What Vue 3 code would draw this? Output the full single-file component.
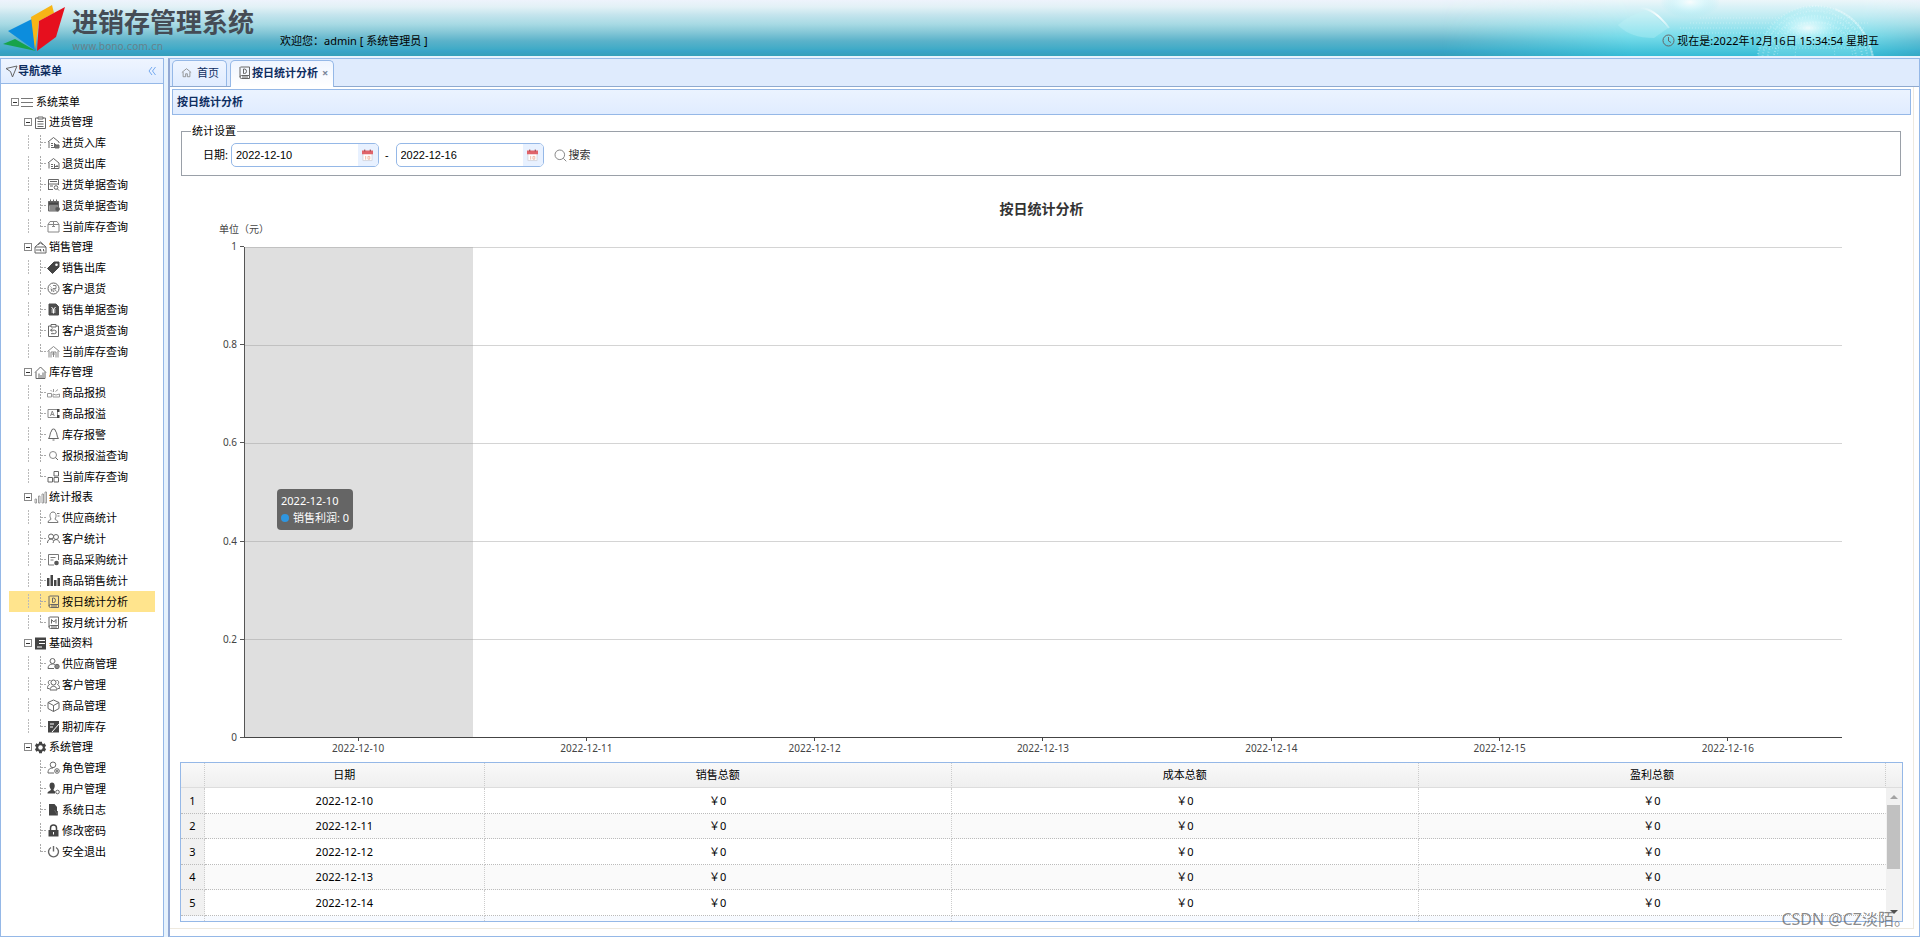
<script setup>
import { ref } from 'vue'

const icons = {
  menu: '<path d="M0 2.500h12M0 6.500h12M0 10.500h12" stroke="#777"/>',
  clipboard: '<path d="M4 2H1.500v10.500h10V2H9M4 1h5v2H4zM3.500 5.500h6M3.500 8h6M3.500 10.500h6"/>',
  houseIn: '<path d="M1 6l5.500-4.500L12 6v1M2 6v6M4 7.500h2M4 9.500h2M4 11.500h3M7.500 7v5"/><path d="M8.500 9h3.500v3H8z" fill="#777"/><path d="M8 8l2 2 2-1"/>',
  houseOut: '<path d="M1 6l5.500-4.500L12 6v5.500H8M2 6v5.500M4 7.500h2M4 9.500h2M4 11.500h3M7.500 7v5M8 9.500h3l-1.500-1.500"/>',
  docSearch: '<path d="M1.500 12V1.500h10V7M1.500 6h10M3 3.500h7M1.500 11.500H6M3 8h3"/><circle cx="9" cy="9.500" r="1.800"/><path d="M10.500 11l1.500 1.500"/>',
  calendarBack: '<path d="M1.500 2.500h10v9.500h-10z" fill="#aaa"/><path d="M1.500 3h10v3h-10z" fill="#444"/><path d="M3.500 0.500v3M6.500 0.500v3M9.500 0.500v3M3 8h7M3 10h5"/><circle cx="10.500" cy="10" r="2" fill="#555"/>',
  box: '<path d="M1 4.500h11v7.500H1zM1 4.500L3 1.500h7l2 3M6.500 1.500v5M5 6.500h3" stroke="#888"/>',
  sale: '<path d="M1 6h11v6H1zM1 6l5.500-5L12 6M4.500 4a2 2 0 014 0"/><path d="M3 8v2M5 8v2M6.500 8v2h1M9.500 8v2h1"/>',
  tag: '<path d="M7 1h5v5l-6.500 6.500L.5 7.500z" fill="#444" stroke="#444"/><circle cx="9.500" cy="3.800" r="1.300" fill="#fff" stroke="none"/>',
  refund: '<circle cx="6.500" cy="6.500" r="5.500"/><path d="M3.500 4.500l1 1M3.500 7h1v2.500M6 3.500h3v3H6v3l1.500-.500M7.500 7L9.500 9.500" stroke-width=".8"/>',
  yen: '<path d="M2 1h7l2.500 2.500V12H2z" fill="#4d4d4d" stroke="#4d4d4d"/><path d="M4.500 4l2 2.500 2-2.500M6.500 6.500v4M4.500 7h4M4.500 9h4" stroke="#fff"/>',
  clipBack: '<path d="M4 2H1.500v10.500h10V2H9M4 .500h5v2.500H4zM5.500 4.500l-2 1.700 2 1.600M3.500 6.200h4a1.700 1.700 0 010 3.500H4"/>',
  houseStock: '<path d="M.5 6.500l6-5 6 5M2 6v6.500M11 6v6.500M4 12.500V7h5v5.500M5 9h3M6.500 7v5" stroke="#888"/>',
  house: '<path d="M1 6.500L6.500 1 12 6.500M2 6v6.500h9V6M5 12V7.500M7 12V9M9 12V6.500"/>',
  damage: '<path d="M.5 7.500h4v3.500h-4zM6 8l3 1 3.500-1v3H6zM6.500 6V3M5 5.500L3.500 4M8.500 5.500L11 3.500" stroke="#999"/>',
  overflow: '<path d="M1 2.500h9.500v8H1zM3.500 9l1.800-5 1.900 5M4.200 7.500h2.400" stroke="#888"/><path d="M10 2h2.500v3H10zM10 8h2.500v3H10z" fill="#444" stroke="none"/>',
  bell: '<path d="M1.500 10.500h10c-2-1.500-1-5.500-3-7.500a2 2 0 00-4 0c-2 2-1 6-3 7.500M5.500 12h2"/>',
  search: '<circle cx="6" cy="6" r="3.500" stroke="#888"/><path d="M8.500 8.500l2.500 2.500"/>',
  blocks: '<path d="M1 7.500h4.500V12H1zM7 7.500h4.500V12H7zM7 1.500h4.500V6H7z"/>',
  bars: '<path d="M1 12V8h1.500v4zM4.500 12V5H6v7zM8 12V3h1.500v9zM11 12V1h1.500v11z" stroke="#888" stroke-width=".8"/>',
  supplier: '<path d="M1 11.500c0-3 3-2 3-3.500-2-3-1-7 2-7s4 4 2 7c0 1.500 3 .500 3 3.500zM10 2.500h2.500M10.500 5h2" stroke="#777"/>',
  people: '<circle cx="4" cy="4.500" r="2.500"/><circle cx="9" cy="5" r="2.500"/><path d="M.5 11c0-3 2-4 3.500-4s2 1 2.500 2M6 11c1-5 6-4 6.500 0"/>',
  purchase: '<path d="M11.500 7V1.500h-10v10.500H7M3.500 4.500h5M3.500 7h3" stroke="#777"/><circle cx="9.500" cy="10" r="2.300" fill="#555" stroke="none"/>',
  solidBars: '<path d="M0 12V4h2.500v8zM3.500 12V1H6v11zM7 12V6h2.500v6zM10.500 12V4H13v8z" fill="#444" stroke="none"/>',
  day: '<path d="M2.500 1h9v8.500H3.500a1.500 1.500 0 000 3h8v-3M2 11V1M4 11h6M5.500 3v4.500h1q2 0 2-2.200T6.500 3z"/>',
  month: '<path d="M2.500 1h9v8.500H3.500a1.500 1.500 0 000 3h8v-3M2 11V1M4 11h6M4.500 7.500V3.500l2.300 2.500L9 3.500v4"/>',
  data: '<path d="M1 .500h11v12H1z" fill="#444" stroke="none"/><path d="M5 3.500h6M5 6.500h6M3 10h5" stroke="#fff"/>',
  userAdd: '<circle cx="5.500" cy="4" r="2.500"/><path d="M1 11.500c0-3 2-4.500 4.500-4.500 1 0 2 0 2.500 1M1 11.500h6"/><circle cx="10" cy="9.500" r="2.200" fill="#888"/>',
  group: '<circle cx="6.500" cy="4.500" r="2.500"/><path d="M3 12c0-5 7-5 7 0zM3.500 2.500C.5 2 1 6 2.500 6.500.5 7.500.5 9 .5 10.500h2M9.500 2.500c3-.500 2.500 3.500 1 4 2 1 2 2.500 2 4h-2"/>',
  cube: '<path d="M6.500 1L12 3.500v6L6.500 12.500 1 9.500v-6zM1 3.500l5.500 3 5.500-3M6.500 6.500v6"/>',
  initial: '<path d="M1 1h11v11.500H1z" fill="#444" stroke="none"/><path d="M3 4h4M3 7h3M5 12l7-8" stroke="#fff"/>',
  gear: '<path d="M6.500 .8v11.400M1.600 3.600l9.800 5.800M1.600 9.400l9.800-5.800" stroke="#444" stroke-width="3"/><circle cx="6.500" cy="6.500" r="4" fill="#444" stroke="#444"/><circle cx="6.500" cy="6.500" r="2.200" fill="#fff" stroke="none"/>',
  role: '<circle cx="6" cy="3.800" r="2.800"/><path d="M1 12c0-4 2-5 5-5M1 12h6"/><circle cx="10" cy="10" r="2.300"/><circle cx="10" cy="10" r=".8"/>',
  user: '<path d="M.5 11.500c0-3 3-2 3.500-4C1.500 4 2.500.5 5 .5s4 3.500 1.500 7c0 1 1 1.500 1.500 2v2z" fill="#444" stroke="none"/><circle cx="10.500" cy="10" r="1.800"/>',
  log: '<path d="M2 1h5.500L10 4v8.500H2z" fill="#444" stroke="none"/><path d="M7.500 7l3 5M10.500 8v4.500"/>',
  lock: '<path d="M1.500 6h10v6.500h-10z" fill="#444" stroke="none"/><path d="M3.500 6V4a3 3 0 016 0v2" stroke="#444" stroke-width="1.500"/><path d="M6.500 8v2.500" stroke="#fff"/>',
  power: '<path d="M4 2.500a5 5 0 105 0M6.500 1v5.500" stroke-width="1.400"/>',
  home: '<path d="M1 6.500L6.500 2 12 6.500M2.500 6v5.500h3V8h2v3.500h3V6" stroke="#888"/>',
  send: '<path d="M1 3.500L12 1 7.500 12 5.500 6.500z"/>',
  clock: '<circle cx="6.500" cy="6.500" r="5.500"/><path d="M6.500 3v4l2.500 1.500"/>',
  find: '<circle cx="5.800" cy="5.800" r="4.800" stroke="#888"/><path d="M9.300 9.300l3 3" stroke="#888"/>'
}

const groups = [
  { name: '进货管理', icon: 'clipboard', items: [['进货入库', 'houseIn'], ['退货出库', 'houseOut'], ['进货单据查询', 'docSearch'], ['退货单据查询', 'calendarBack'], ['当前库存查询', 'box']] },
  { name: '销售管理', icon: 'sale', items: [['销售出库', 'tag'], ['客户退货', 'refund'], ['销售单据查询', 'yen'], ['客户退货查询', 'clipBack'], ['当前库存查询', 'houseStock']] },
  { name: '库存管理', icon: 'house', items: [['商品报损', 'damage'], ['商品报溢', 'overflow'], ['库存报警', 'bell'], ['报损报溢查询', 'search'], ['当前库存查询', 'blocks']] },
  { name: '统计报表', icon: 'bars', items: [['供应商统计', 'supplier'], ['客户统计', 'people'], ['商品采购统计', 'purchase'], ['商品销售统计', 'solidBars'], ['按日统计分析', 'day'], ['按月统计分析', 'month']] },
  { name: '基础资料', icon: 'data', items: [['供应商管理', 'userAdd'], ['客户管理', 'group'], ['商品管理', 'cube'], ['期初库存', 'initial']] },
  { name: '系统管理', icon: 'gear', items: [['角色管理', 'role'], ['用户管理', 'user'], ['系统日志', 'log'], ['修改密码', 'lock'], ['安全退出', 'power']] }
]

const current = '按日统计分析'
const from = ref('2022-12-10')
const to = ref('2022-12-16')
const days = ['2022-12-10', '2022-12-11', '2022-12-12', '2022-12-13', '2022-12-14', '2022-12-15', '2022-12-16']
const scale = ['1', '0.8', '0.6', '0.4', '0.2', '0']
</script>

<template>
  <div class="page">
    <header class="banner">
      <svg class="art" viewBox="0 0 480 56" preserveAspectRatio="none" aria-hidden="true">
        <defs>
          <linearGradient id="sea" x1="0" y1="0" x2="0" y2="1">
            <stop offset="0" stop-color="#ecf6fa" />
            <stop offset=".3" stop-color="#bdebf2" />
            <stop offset=".65" stop-color="#78dcea" />
            <stop offset="1" stop-color="#35bcd6" />
          </linearGradient>
          <linearGradient id="fade" x1="0" y1="0" x2="1" y2="0">
            <stop offset="0" stop-color="#000" />
            <stop offset=".4" stop-color="#fff" />
            <stop offset=".88" stop-color="#fff" />
            <stop offset="1" stop-color="#555" />
          </linearGradient>
          <radialGradient id="glow">
            <stop offset="0" stop-color="#fff" stop-opacity=".95" />
            <stop offset=".4" stop-color="#d8fbff" stop-opacity=".6" />
            <stop offset="1" stop-color="#8be6f2" stop-opacity="0" />
          </radialGradient>
          <linearGradient id="edge" x1="0" y1="0" x2="1" y2="1">
            <stop offset="0" stop-color="#fff" stop-opacity="0" />
            <stop offset=".5" stop-color="#fff" stop-opacity=".9" />
            <stop offset="1" stop-color="#fff" stop-opacity=".3" />
          </linearGradient>
          <mask id="side"><rect width="480" height="56" fill="url(#fade)" /></mask>
        </defs>
        <rect width="480" height="56" fill="url(#sea)" mask="url(#side)" />
        <ellipse cx="250" cy="2" rx="30" ry="16" fill="url(#glow)" opacity=".8" />
        <path d="M178 25q14-12 30-15l20 18-14 10q-24 0-36-13" fill="#c8f5fa" opacity=".3" />
        <path d="M200 8q14 0 29 20" fill="none" stroke="url(#edge)" stroke-width="2" />
        <circle cx="375" cy="64" r="58" fill="#a6eef6" opacity=".3" />
        <g fill="none" stroke="#f0ffff" stroke-opacity=".35" stroke-dasharray="1 2">
          <circle cx="375" cy="64" r="58" stroke-width="2" />
          <circle cx="375" cy="64" r="53" stroke-width="2" />
          <circle cx="375" cy="64" r="48" stroke-width="2" />
          <circle cx="375" cy="64" r="42" stroke-width="2" />
          <ellipse cx="375" cy="64" rx="38" ry="58" />
          <ellipse cx="375" cy="64" rx="20" ry="58" />
          <path d="M260 18h150M250 23h180M240 28h185M245 33h180M260 38h160M322 43h106M320 48h110" />
        </g>
        <ellipse cx="368" cy="28" rx="42" ry="20" fill="url(#glow)" opacity=".85" />
        <path d="M395 9q30 12 38 47" fill="none" stroke="#fff" stroke-opacity=".3" stroke-width="2" />
      </svg>
      <svg class="logo" viewBox="0 0 62 48" aria-hidden="true">
        <path d="M0 39l12-5 21 12z" fill="#17a34a" />
        <path d="M5 26l24-12 4 32z" fill="#0c8ddd" />
        <path d="M28 12L49 0l2 8-15 8-4 29z" fill="#f7b516" />
        <path d="M36 16L62 2 53 32 34 46z" fill="#e60f1e" />
      </svg>
      <div class="brand">
        <strong>进销存管理系统</strong>
        <span>www.bono.com.cn</span>
      </div>
      <p class="welcome">欢迎您：admin [ 系统管理员 ]</p>
      <p class="now"><svg class="icon" viewBox="0 0 13 13" v-html="icons.clock"></svg>现在是:2022年12月16日 15:34:54 星期五</p>
    </header>

    <div class="body">
      <nav class="side">
        <div class="side-head">
          <svg class="icon" viewBox="0 0 13 13" v-html="icons.send"></svg>
          <b>导航菜单</b>
          <button type="button" aria-label="收起">
            <svg viewBox="0 0 8 8"><path d="M4 0L1 4l3 4M7.500 0l-3 4 3 4" fill="none" stroke="#74a8ee" /></svg>
          </button>
        </div>
        <ul class="tree">
          <li>
            <div class="row head"><i class="toggle"></i><svg class="icon" viewBox="0 0 13 13" v-html="icons.menu"></svg><a href="#">系统菜单</a></div>
          </li>
          <li v-for="(g, gi) in groups" :key="g.name">
            <div class="row head"><i class="cell"></i><i class="toggle"></i><svg class="icon" viewBox="0 0 13 13" v-html="icons[g.icon]"></svg><a href="#">{{ g.name }}</a></div>
            <ul>
              <li v-for="([name, icon], i) in g.items" :key="name" class="row" :class="{ on: name === current }">
                <i class="cell"></i>
                <i class="cell" :class="{ line: gi < groups.length - 1 }"></i>
                <i class="cell join" :class="{ end: i === g.items.length - 1 }"></i>
                <svg class="icon" viewBox="0 0 13 13" v-html="icons[icon]"></svg>
                <a href="#">{{ name }}</a>
              </li>
            </ul>
          </li>
        </ul>
      </nav>

      <main class="main">
        <div class="tabs">
          <button type="button" class="tab"><svg class="icon" viewBox="0 0 13 13" v-html="icons.home"></svg>首页</button>
          <button type="button" class="tab active"><svg class="icon" viewBox="0 0 13 13" v-html="icons.day"></svg>按日统计分析<span class="close">×</span></button>
        </div>
        <div class="content">
          <h1>按日统计分析</h1>
          <div class="inner">
            <fieldset>
              <legend>统计设置</legend>
              <div class="form">
                <label for="from">日期:</label>
                <div class="date">
                  <input id="from" v-model="from" type="text" />
                  <button type="button" aria-label="选择开始日期">
                    <svg viewBox="0 0 12 13"><path d="M1 4h10v8H1z" fill="#fff" stroke="#d5d5dd" /><path d="M0 1h12v4H0z" fill="#e0646a" /><path d="M3 0v2M9 0v2" stroke="#883038" /><path d="M4 7v4M6.500 7.500h2v3h-2z" fill="none" stroke="#f0b6a0" /></svg>
                  </button>
                </div>
                <span class="dash">-</span>
                <div class="date">
                  <input id="to" v-model="to" type="text" aria-label="结束日期" />
                  <button type="button" aria-label="选择结束日期">
                    <svg viewBox="0 0 12 13"><path d="M1 4h10v8H1z" fill="#fff" stroke="#d5d5dd" /><path d="M0 1h12v4H0z" fill="#e0646a" /><path d="M3 0v2M9 0v2" stroke="#883038" /><path d="M4 7v4M6.500 7.500h2v3h-2z" fill="none" stroke="#f0b6a0" /></svg>
                  </button>
                </div>
                <button type="button" class="find"><svg class="icon" viewBox="0 0 13 13" v-html="icons.find"></svg>搜索</button>
              </div>
            </fieldset>

            <section class="chart">
              <h2>按日统计分析</h2>
              <p class="unit">单位（元）</p>
              <div class="plot">
                <div class="yaxis"><span v-for="s in scale" :key="s">{{ s }}</span></div>
                <div class="grid">
                  <div v-for="n in 5" :key="n" class="band"></div>
                  <div class="hover" :style="{ width: 100 / days.length + '%' }"></div>
                  <div class="tip">
                    <div>2022-12-10</div>
                    <div><i></i>销售利润: 0</div>
                  </div>
                </div>
              </div>
              <div class="xaxis"><span v-for="d in days" :key="d">{{ d }}</span></div>
            </section>

            <div class="list">
              <table>
                <colgroup><col class="c-no" /><col class="c-date" /><col class="c-sum" /><col class="c-sum" /><col /></colgroup>
                <thead>
                  <tr><th></th><th>日期</th><th>销售总额</th><th>成本总额</th><th>盈利总额</th></tr>
                </thead>
                <tbody>
                  <tr v-for="(d, i) in days.slice(0, 5)" :key="d"><td>{{ i + 1 }}</td><td>{{ d }}</td><td>￥0</td><td>￥0</td><td>￥0</td></tr>
                  <tr class="rest"><td></td><td></td><td></td><td></td><td></td></tr>
                </tbody>
              </table>
              <div class="scroll">
                <div class="scroll-head"></div>
                <div class="track"><i class="up"></i><div class="thumb"></div><i class="down"></i></div>
              </div>
            </div>
          </div>
        </div>
      </main>
    </div>
    <div class="mark">CSDN @CZ淡陌。</div>
  </div>
</template>

<style>
body {
  margin: 0;
}
</style>

<style scoped>
.page {
  position: relative;
  display: flex;
  flex-direction: column;
  height: 100vh;
  min-height: 800px;
  overflow: hidden;
  background: #e6f2fd;
  color: #000;
  font: 11px/14px "Noto Sans", "Noto Sans CJK SC", sans-serif;
}
.page * {
  box-sizing: border-box;
}
p,
h1,
h2,
ul {
  margin: 0;
  padding: 0;
  list-style: none;
}
button,
input {
  margin: 0;
  padding: 0;
  border: 0;
  background: none;
  color: inherit;
  font: inherit;
}
a {
  color: inherit;
  text-decoration: none;
}
.icon {
  flex: none;
  width: 13px;
  height: 13px;
  fill: none;
  stroke: #666;
}
.banner {
  position: relative;
  flex: none;
  display: flex;
  height: 56px;
  background: linear-gradient(#eef3fc 0, #e2f1f6 7px, #c4e4ed 15px, #a8dae4 24px, #86c8d7 32px, #5bb2ca 41px, #40abc7 49px, #38a3c9 51px, #359fb9 56px);
}
.art {
  position: absolute;
  top: 0;
  right: 0;
  width: 480px;
  height: 56px;
}
.logo {
  width: 62px;
  height: 48px;
  margin: 5px 0 0 3px;
}
.brand {
  display: flex;
  flex-direction: column;
  width: 192px;
  margin: 6px 0 0 7px;
  color: #454c55;
  white-space: nowrap;
}
.brand strong {
  font-size: 26px;
  line-height: 33px;
}
.brand span {
  color: #66828c;
  font: 10px/16px "DejaVu Sans", sans-serif;
}
.welcome {
  margin: 34px 0 0 16px;
}
.now {
  position: relative;
  display: flex;
  gap: 2px;
  margin: 34px 41px 0 auto;
}
.body {
  flex: 1;
  display: flex;
  gap: 4px;
  min-height: 0;
  padding-top: 2px;
}
.side {
  flex: none;
  width: 164px;
  border: 1px solid #95b8e7;
  background: #fff;
}
.side-head {
  display: flex;
  align-items: center;
  height: 25px;
  padding: 0 7px 0 4px;
  border-bottom: 1px solid #95b8e7;
  background: linear-gradient(#eff5ff, #e0ecff);
  color: #0e2d5f;
}
.side-head button {
  width: 8px;
  height: 8px;
  margin-left: auto;
}
.side-head button svg {
  display: block;
}
.tree {
  padding: 8px 8px 0;
}
.row {
  display: flex;
  align-items: center;
  height: 21px;
}
.row.head {
  height: 20px;
}
.row.on {
  background: #ffe48d;
}
.row .icon {
  margin: 0 1px 0 -1px;
}
.row a {
  padding-left: 1px;
  white-space: nowrap;
}
.row .cell {
  flex: none;
  align-self: stretch;
  width: 13px;
}
.row .line {
  background: repeating-linear-gradient(#bbb 0 2px, transparent 2px 3px) 6px 3px / 1px 15px no-repeat;
}
.row .join {
  background: repeating-linear-gradient(#aaa 0 2px, transparent 2px 3px) 5px 3px / 1px 15px no-repeat, repeating-linear-gradient(90deg, #aaa 0 2px, transparent 2px 3px) 6px 10px / 6px 1px no-repeat;
}
.row .end {
  background-size: 1px 8px, 6px 1px;
}
.toggle {
  flex: none;
  width: 8px;
  height: 8px;
  margin: 0 3px 0 2px;
  border: 1px solid #888;
  background: linear-gradient(#333, #333) center / 4px 1px no-repeat #fff;
}
.main {
  flex: 1;
  display: flex;
  flex-direction: column;
  min-width: 0;
  border: 1px solid #95b8e7;
  border-left: 2px solid #93a9d4;
  background: #fff;
}
.tabs {
  flex: none;
  display: flex;
  gap: 3px;
  height: 28px;
  padding: 1px 0 0 2px;
  border-bottom: 1px solid #8ea9cf;
  background: #dfebfd;
}
.tab {
  display: flex;
  align-items: center;
  height: 26px;
  padding: 0 7px 2px 8px;
  border: 1px solid #95b8e7;
  border-bottom: 0;
  border-radius: 5px 5px 0 0;
  background: linear-gradient(#eff5ff, #e0ecff);
  color: #0e2d5f;
}
.tab:first-child .icon {
  width: 11px;
  margin-right: 5px;
}
.tab.active {
  height: 27px;
  padding: 0 5px 3px 7px;
  background: linear-gradient(#eff5ff, #fff);
  font-weight: bold;
}
.tab.active .icon {
  margin-right: 1px;
}
.close {
  margin-left: 4px;
  color: #7b879a;
}
.content {
  flex: 1;
  display: flex;
  flex-direction: column;
  min-height: 0;
  margin: 0 5px 7px 0;
  padding: 2px 2px 6px;
  border: solid #eee9df;
  border-width: 0 1px 1px 0;
}
h1 {
  flex: none;
  height: 26px;
  padding: 0 4px;
  border: 1px solid #95b8e7;
  background: linear-gradient(#ebf3ff, #e0ecff);
  color: #0e2d5f;
  font-size: 11px;
  line-height: 24px;
}
.inner {
  flex: 1;
  display: flex;
  flex-direction: column;
  min-height: 0;
  padding: 9px 8px 0;
}
fieldset {
  flex: none;
  min-width: 0;
  margin: 0 2px 0 1px;
  padding: 5px 0 8px 21px;
  border: 1px solid #9aa0a8;
}
legend {
  margin-left: -12px;
  padding: 0 1px;
}
.form {
  display: flex;
  align-items: center;
}
.date {
  display: flex;
  width: 148px;
  height: 24px;
  margin-left: 3px;
  overflow: hidden;
  border: 1px solid #95b8e7;
  border-radius: 5px;
  background: #fff;
}
.date input {
  flex: 1;
  min-width: 0;
  padding: 0 4px;
  outline: 0;
  font-family: "Liberation Sans", sans-serif;
}
.date button {
  width: 20px;
  background: #e8f1ff;
}
.date button svg {
  display: block;
  width: 11px;
  height: 13px;
  margin: auto;
}
.dash {
  padding: 0 4px 0 6px;
}
.find {
  display: flex;
  align-items: center;
  gap: 2px;
  margin-left: 10px;
  color: #333;
}
.chart {
  flex: 1;
  display: flex;
  flex-direction: column;
  min-height: 0;
  padding: 23px 61px 0 2px;
  color: #444;
}
h2 {
  margin-right: -59px;
  color: #333;
  font-size: 14px;
  line-height: 20px;
  text-align: center;
}
.unit {
  margin: 3px 0 11px 37px;
  font-size: 10px;
  line-height: 14px;
}
.plot {
  flex: 1;
  display: flex;
  min-height: 0;
}
.yaxis {
  display: flex;
  flex-direction: column;
  justify-content: space-between;
  width: 62px;
  margin: -8px 0 -6px;
  font-size: 10px;
  line-height: 14px;
  text-align: right;
}
.yaxis span::after {
  display: inline-block;
  width: 4px;
  height: 1px;
  margin-left: 3px;
  background: #555;
  content: "";
  vertical-align: 3px;
}
.grid {
  position: relative;
  flex: 1;
  display: flex;
  flex-direction: column;
  border-left: 1px solid #555;
  border-bottom: 1px solid #444;
}
.band {
  flex: 1;
  border-top: 1px solid #d4d4d4;
}
.hover {
  position: absolute;
  inset: 0 auto 0 0;
  background: rgba(150, 150, 150, 0.3);
}
.tip {
  position: absolute;
  top: 49.3%;
  left: 32px;
  padding: 3px 4px 4px;
  border-radius: 4px;
  background: rgba(80, 80, 80, 0.85);
  color: #fff;
  line-height: 17px;
  white-space: nowrap;
}
.tip i {
  display: inline-block;
  width: 8px;
  height: 8px;
  margin-right: 4px;
  border-radius: 50%;
  background: #2f96e0;
}
.xaxis {
  flex: none;
  display: flex;
  height: 24px;
  margin-left: 62px;
  font-size: 10px;
  line-height: 14px;
}
.xaxis span {
  flex: 1;
  text-align: center;
}
.xaxis span::before {
  display: block;
  width: 1px;
  height: 3px;
  margin: 0 auto;
  background: #444;
  content: "";
}
.list {
  flex: none;
  display: flex;
  height: 160px;
  overflow: hidden;
  border: 1px solid #95b8e7;
}
table {
  flex: 1;
  width: 0;
  height: 158px;
  border-collapse: separate;
  border-spacing: 0;
  table-layout: fixed;
  text-align: center;
}
.c-no {
  width: 24px;
}
.c-date {
  width: 16.4%;
}
.c-sum {
  width: 27.4%;
}
th,
td {
  height: 25px;
  padding: 0;
  border-right: 1px dotted #ccc;
  border-bottom: 1px dotted #bbb;
  font-weight: normal;
}
th {
  border-bottom: 1px solid #ddd;
  background: linear-gradient(#f9f9f9, #efefef);
}
tbody tr:nth-child(odd) td {
  height: 26px;
}
tbody tr:nth-child(even) td {
  background: #fafafa;
}
tbody tr td:first-child {
  background: #f1f1f1;
}
td:last-child {
  border-right-color: transparent;
}
tbody tr.rest td {
  height: 5px;
  border-bottom: 0;
  background: #f7faff;
}
.scroll {
  display: flex;
  flex-direction: column;
  width: 16px;
}
.scroll-head {
  height: 25px;
  border-bottom: 1px solid #ddd;
  background: linear-gradient(#f9f9f9, #efefef);
}
.track {
  flex: 1;
  display: flex;
  flex-direction: column;
  align-items: center;
  padding: 7px 1px 7px 0;
  background: #f1f1f1;
}
.up,
.down {
  border: 4px solid transparent;
  border-top: 0;
  border-bottom-color: #a3a3a3;
}
.down {
  margin-top: auto;
  border-top: 4px solid #505050;
  border-bottom: 0;
}
.thumb {
  width: 13px;
  height: 64px;
  margin-top: 6px;
  background: #c1c1c1;
}
.mark {
  position: absolute;
  right: 10px;
  bottom: 7px;
  color: rgba(100, 100, 100, 0.75);
  font-size: 16px;
  line-height: 22px;
}
</style>
